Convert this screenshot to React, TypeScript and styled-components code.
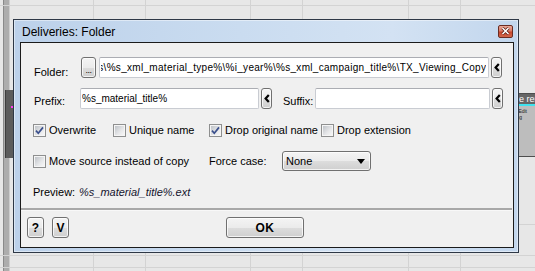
import { useLayoutEffect, useRef } from 'react'
import styled, { createGlobalStyle, css } from 'styled-components'

const GlobalStyle = createGlobalStyle`
  html, body {
    margin: 0;
    padding: 0;
    background: #e7e7e7;
  }
  body {
    font-family: "Liberation Sans", Arial, sans-serif;
  }
`

// canvas grid behind the dialog
const gridLines: [number, number, string, string, string][] = [
  [93, 0, '1px', '100%', '#d3d3d3'],
  [145, 0, '1px', '100%', '#d3d3d3'],
  [250, 0, '1px', '100%', '#d3d3d3'],
  [302, 0, '1px', '100%', '#d3d3d3'],
  [408, 0, '1px', '100%', '#d3d3d3'],
  [460, 0, '1px', '100%', '#d3d3d3'],
  [0, 5, '100%', '1px', '#d3d3d3'],
  [518, 224, '100%', '1px', '#d3d3d3'],
  [0, 255, '100%', '1px', '#d3d3d3'],
  [0, 267, '100%', '1px', '#d3d3d3'],
  [3, 0, '1px', '100%', '#8a8a8a'],
  [4, 0, '5px', '100%', '#adadad'],
  [9, 0, '1px', '100%', '#cdcdcd'],
]

const Canvas = styled.div`
  position: relative;
  width: 535px;
  height: 271px;
  overflow: hidden;
  background-color: #e7e7e7;
  background-image: ${gridLines.map((l) => `linear-gradient(${l[4]}, ${l[4]})`).join(', ')};
  background-position: ${gridLines.map((l) => `${l[0]}px ${l[1]}px`).join(', ')};
  background-size: ${gridLines.map((l) => `${l[2]} ${l[3]}`).join(', ')};
  background-repeat: no-repeat;
`

const SideNode = styled.div`
  position: absolute;
  left: 5px;
  top: 90px;
  width: 10px;
  height: 68px;
  background: #5c5c5c;
  border-left: 1px solid #3e3e3e;

  &::before {
    content: '';
    display: block;
    margin: 16px 0 0 5px;
    width: 3px;
    height: 2px;
    background: #ff3cf0;
  }
`

const Node = styled.div`
  position: absolute;
  left: 496px;
  top: 93px;
  width: 70px;
  height: 64px;
  box-sizing: border-box;
  border: 1px solid #4e4e4e;
  background: #bdbdbd;
  display: flex;
  flex-direction: column;
`

const NodeHeader = styled.div`
  height: 10px;
  background: #666;
  border-bottom: 2px solid #3fe2ee;
  color: #fff;
  font-size: 9px;
  line-height: 10px;
  padding-left: 5px;
  white-space: nowrap;
`

const NodeBody = styled.div`
  padding: 2px 0 0 5px;
  font-size: 5px;
  line-height: 6px;
  color: #222;
  white-space: nowrap;
`

// the dialog window
const Window = styled.div`
  position: absolute;
  left: 13px;
  top: 19px;
  width: 506px;
  height: 234px;
  box-sizing: border-box;
  border: 1px solid #2e3846;
  background: linear-gradient(90deg, #bcd1ea 0%, #cadcf0 45%, #d3e2f3 75%, #c2d6ed 100%);
  box-shadow: inset 0 0 0 1px rgba(255, 255, 255, 0.45);
  display: flex;
  flex-direction: column;
  padding: 0 4px 4px 6px;
`

const TitleBar = styled.div`
  height: 22px;
  display: flex;
  align-items: center;
  padding-left: 2px;
`

const Title = styled.div`
  flex: 1;
  padding-top: 2px;
  font-size: 12px;
  color: #000;
`

const CloseButton = styled.div`
  width: 15px;
  height: 13px;
  margin-right: 1px;
  box-sizing: border-box;
  border: 1px solid #6b2c22;
  border-radius: 2px;
  background: linear-gradient(#e9a99a 0%, #d97a66 45%, #c7442b 55%, #d2674c 100%);
  display: flex;
  align-items: center;
  justify-content: center;
`

const Client = styled.div`
  flex: 1;
  box-sizing: border-box;
  border: 1px solid #1b1b1b;
  background: #f0f0f0;
  display: flex;
  flex-direction: column;
  font-size: 11px;
  color: #000;
`

const Row = styled.div<{ $top: number; $height: number; $left?: number }>`
  display: flex;
  align-items: center;
  margin-top: ${(p) => p.$top}px;
  height: ${(p) => p.$height}px;
  padding-left: ${(p) => p.$left ?? 13}px;
`

const Label = styled.div<{ $width: number; $drop?: number }>`
  width: ${(p) => p.$width}px;
  flex-shrink: 0;
  margin-top: ${(p) => p.$drop ?? 0}px;
  white-space: nowrap;
`

const buttonFace = css`
  box-sizing: border-box;
  border: 1px solid #707070;
  border-radius: 3px;
  background: linear-gradient(#f4f4f4 0%, #ebebeb 50%, #dddddd 51%, #cfcfcf 100%);
  box-shadow: inset 0 0 0 1px rgba(255, 255, 255, 0.75);
  padding: 0;
  margin: 0;
  font-family: "Liberation Sans", Arial, sans-serif;
  color: #000;
  flex-shrink: 0;
`

const DotsButton = styled.button`
  ${buttonFace};
  width: 15px;
  height: 21px;
  margin-right: 3px;
  font-size: 9px;
  line-height: 9px;
  padding-top: 6px;
  letter-spacing: -0.5px;
`

const ArrowButton = styled.button<{ $gap?: number }>`
  ${buttonFace};
  width: 11px;
  height: 21px;
  margin-left: 2px;
  margin-right: ${(p) => p.$gap ?? 0}px;
  display: flex;
  align-items: center;
  justify-content: center;
`

const TextBox = styled.input<{ $width: number; $spacing?: number }>`
  width: ${(p) => p.$width}px;
  height: 21px;
  flex-shrink: 0;
  box-sizing: border-box;
  margin: 0;
  border: 1px solid #c9ccd2;
  border-top-color: #abadb3;
  border-radius: 2px;
  background: #fff;
  outline: none;
  padding: 0 2px 0 1px;
  font-family: "Liberation Sans", Arial, sans-serif;
  font-size: 10px;
  letter-spacing: ${(p) => p.$spacing ?? 0}px;
  color: #000;
`

const Cell = styled.label<{ $width?: number }>`
  display: flex;
  align-items: center;
  gap: 3px;
  width: ${(p) => (p.$width ? `${p.$width}px` : 'auto')};
  flex-shrink: 0;
  white-space: nowrap;
`

const Box = styled.span`
  width: 13px;
  height: 13px;
  box-sizing: border-box;
  border: 1px solid #8e8f8f;
  padding: 1px;
  background: linear-gradient(135deg, #bfc3c8 0%, #e6e7e9 60%, #f6f6f6 100%) content-box, #f5f5f5;
  display: flex;
  align-items: center;
  justify-content: center;
`

const Select = styled.div`
  ${buttonFace};
  width: 89px;
  height: 20px;
  display: flex;
  align-items: center;
  justify-content: space-between;
  padding: 0 5px 0 3px;
  font-size: 11px;
`

const PreviewValue = styled.span`
  font-style: italic;
  color: #14142e;
`

const Separator = styled.div`
  height: 2px;
  margin: 9px 1px 0 0;
  background: #a8a8a8;
  border-bottom: 1px solid #f8f8f8;
`

const SmallButton = styled.button`
  ${buttonFace};
  width: 17px;
  height: 21px;
  margin-right: 8px;
  font-size: 12px;
  font-weight: bold;
`

const OkButton = styled.button`
  ${buttonFace};
  width: 78px;
  height: 21px;
  margin-left: 149px;
  font-size: 12px;
  font-weight: bold;
  letter-spacing: 0.5px;
`

const Chevron = () => (
  <svg width="6" height="9" viewBox="0 0 6 9">
    <path d="M4.8 1 L1.6 4.5 L4.8 8" stroke="#000" strokeWidth="2.2" fill="none" />
  </svg>
)

const CheckBox = ({ checked, label, width }: { checked?: boolean; label: string; width?: number }) => (
  <Cell $width={width}>
    <Box>
      {checked && (
        <svg width="9" height="9" viewBox="0 0 9 9">
          <path d="M1 4.6 L3.3 7.2 L8 1.4" stroke="#3a4f8c" strokeWidth="1.7" fill="none" />
        </svg>
      )}
    </Box>
    {label}
  </Cell>
)

const folderPath =
  'C:\\Deliveries\\%s_xml_material_type%\\%i_year%\\%s_xml_campaign_title%\\TX_Viewing_Copy'

const App = () => {
  const folderRef = useRef<HTMLInputElement>(null)

  useLayoutEffect(() => {
    if (folderRef.current) folderRef.current.scrollLeft = folderRef.current.scrollWidth
  }, [])

  return (
    <Canvas>
      <GlobalStyle />
      <SideNode />
      <Node>
        <NodeHeader>Move rename</NodeHeader>
        <NodeBody>
          Coord. Edit
          <br />
          Updating
        </NodeBody>
      </Node>

      <Window>
        <TitleBar>
          <Title>Deliveries: Folder</Title>
          <CloseButton>
            <svg width="9" height="8" viewBox="0 0 9 8">
              <path d="M1.5 1 L7.5 7 M7.5 1 L1.5 7" stroke="#5a1a10" strokeWidth="3" />
              <path d="M1.5 1 L7.5 7 M7.5 1 L1.5 7" stroke="#fff" strokeWidth="1.6" />
            </svg>
          </CloseButton>
        </TitleBar>

        <Client>
          <Row $top={14} $height={21}>
            <Label $width={47} $drop={8}>Folder:</Label>
            <DotsButton>...</DotsButton>
            <TextBox ref={folderRef} $width={390} $spacing={0.3} readOnly defaultValue={folderPath} />
            <ArrowButton>
              <Chevron />
            </ArrowButton>
          </Row>

          <Row $top={10} $height={21}>
            <Label $width={46} $drop={5}>Prefix:</Label>
            <TextBox $width={179} readOnly defaultValue="%s_material_title%" />
            <ArrowButton $gap={11}>
              <Chevron />
            </ArrowButton>
            <Label $width={32} $drop={5}>Suffix:</Label>
            <TextBox $width={175} readOnly defaultValue="" />
            <ArrowButton>
              <Chevron />
            </ArrowButton>
          </Row>

          <Row $top={13} $height={16} $left={12}>
            <CheckBox checked label="Overwrite" width={80} />
            <CheckBox label="Unique name" width={96} />
            <CheckBox checked label="Drop original name" width={112} />
            <CheckBox label="Drop extension" />
          </Row>

          <Row $top={13} $height={20} $left={12}>
            <CheckBox label="Move source instead of copy" width={176} />
            <Label $width={73}>Force case:</Label>
            <Select>
              None
              <svg width="8" height="5" viewBox="0 0 8 5">
                <path d="M0 0 H8 L4 5 Z" fill="#000" />
              </svg>
            </Select>
          </Row>

          <Row $top={14} $height={14} $left={12}>
            <Label $width={46}>Preview:</Label>
            <PreviewValue>%s_material_title%.ext</PreviewValue>
          </Row>

          <Separator />

          <Row $top={6} $height={21} $left={6}>
            <SmallButton>?</SmallButton>
            <SmallButton>V</SmallButton>
            <OkButton>OK</OkButton>
          </Row>
        </Client>
      </Window>
    </Canvas>
  )
}

export default App
